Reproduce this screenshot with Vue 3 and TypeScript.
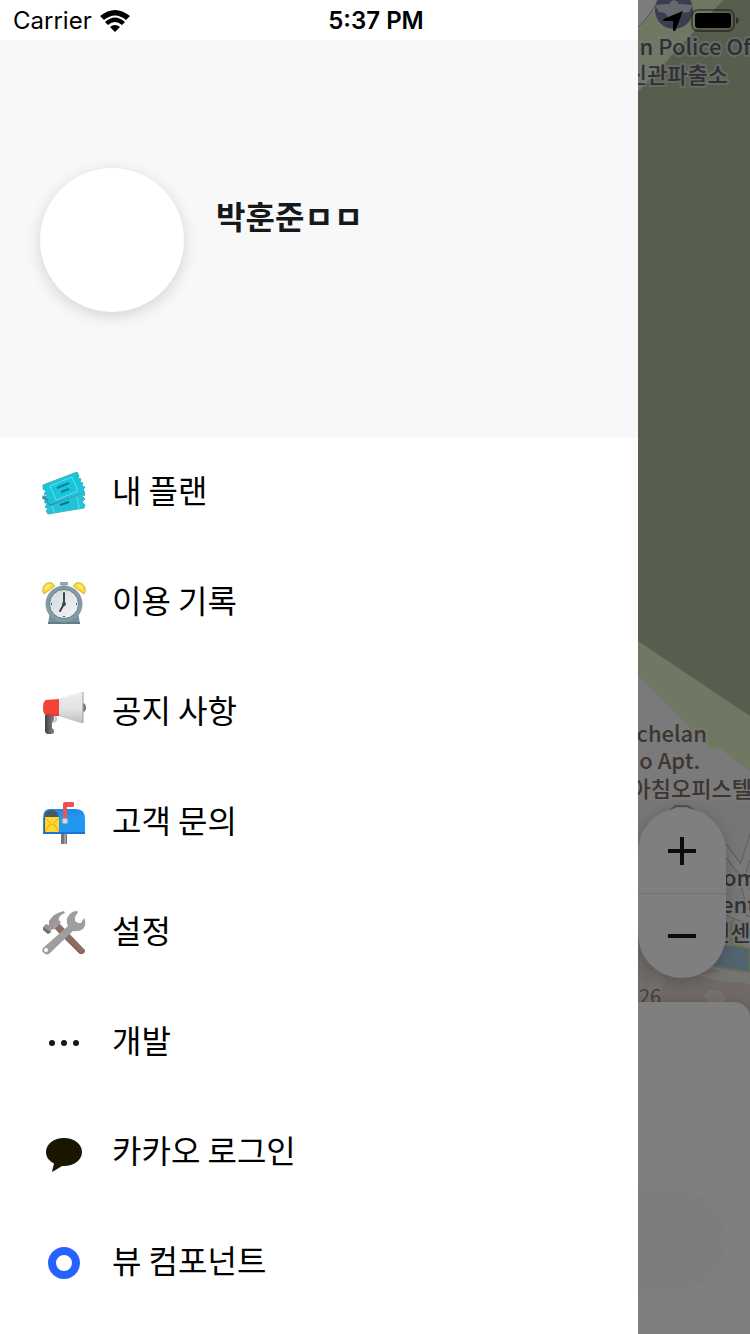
<script setup lang="ts">
interface MenuItem {
  id: string
  label: string
}

const userName = '박훈준ㅁㅁ'

const items: MenuItem[] = [
  { id: 'plan', label: '내 플랜' },
  { id: 'history', label: '이용 기록' },
  { id: 'notice', label: '공지 사항' },
  { id: 'contact', label: '고객 문의' },
  { id: 'settings', label: '설정' },
  { id: 'dev', label: '개발' },
  { id: 'kakao', label: '카카오 로그인' },
  { id: 'view', label: '뷰 컴포넌트' },
]
</script>

<template>
  <div class="app">
    <div class="backdrop">
      <svg class="map" viewBox="0 0 112 1030" aria-hidden="true">
        <rect width="112" height="1030" fill="#f4f4f4" />
        <path d="M20 0H112V771L80 747L72 749L0 675V27Q12 16 20 0Z" fill="#dcf0c6" />
        <path d="M20 0Q12 16 0 27V0Z" fill="#fafafa" />
        <path d="M20 0Q12 16 0 27" fill="none" stroke="#a9a9a5" stroke-width="1" />
        <path d="M85 0H112V716L0 641V92Z" fill="#aebc9c" />
        <path d="M0 800H112V1030H0Z" fill="#ececec" />
        <path d="M0 935L112 985V1030H0Z" fill="#ded4ce" />
        <path d="M60 975L112 968V982Q84 984 60 975Z" fill="#e8e8e6" />
        <path d="M78 944Q94 944 112 949V972Q90 970 70 965Z" fill="#a4c8e0" stroke="#d0dca8" stroke-width="2" />
        <path d="M28 813L38 806H50L59 813" fill="#f4f4f4" stroke="#a4a4a4" stroke-width="2" />
        <g fill="none" stroke-linecap="round">
          <path d="M86 848L104 872L116 835M104 872L112 905M86 910L112 921" stroke="#bdbdbd" stroke-width="9" />
          <path d="M86 848L104 872L116 835M104 872L112 905M86 910L112 921" stroke="#f3f3f3" stroke-width="7" />
        </g>
        <path d="M64 995L72 988L76 991L80 988L90 999L82 1006H70Z" fill="#e8e2de" stroke="#cfc6c0" />
        <path d="M0 973L8 990L22 968L28 980L18 1002H0Z" fill="#e4dcd7" />
        <path d="M86 923L96 919L106 947L88 944Z" fill="#d2deb6" />

        <circle cx="36" cy="10" r="19" fill="#757c9e" />
        <path d="M17 5L29 4Q32 5 32 2L36 0L40 2Q40 5 43 4L55 5L51 12L45 13L42 17L36 21L30 17L27 13L21 12Z" fill="#cdd0dc" />
        <g class="place place-blue">
          <text x="120" y="55" text-anchor="end">an Police Off</text>
          <text x="90" y="83" text-anchor="end">신관파출소</text>
          <text x="85" y="886">oma</text>
          <text x="83" y="913">ente</text>
          <text x="72" y="941">민센터</text>
        </g>
        <g class="place place-brown">
          <text x="69" y="742" text-anchor="end">Richelan</text>
          <text x="62" y="769" text-anchor="end">Studio Apt.</text>
          <text x="114" y="797" text-anchor="end">아침오피스텔</text>
        </g>
        <text class="road" x="1" y="1004">26</text>
      </svg>
      <div class="zoom-control">
        <button type="button" aria-label="확대">
          <svg viewBox="0 0 28 28" aria-hidden="true"><path d="M0 14H28M14 0V28" /></svg>
        </button>
        <button type="button" aria-label="축소">
          <svg viewBox="0 0 28 28" aria-hidden="true"><path d="M0 14H28" /></svg>
        </button>
      </div>
      <section class="sheet">
        <button type="button" class="sheet-action" aria-label="선택"></button>
      </section>
    </div>
    <div class="scrim"></div>

    <aside class="drawer">
      <header class="profile">
        <div class="avatar"></div>
        <div class="identity">
          <h1>{{ userName }}</h1>
        </div>
      </header>
      <nav>
        <ul class="menu">
          <li v-for="item in items" :key="item.id">
            <a href="#" class="entry">
              <svg v-if="item.id === 'plan'" class="icon" viewBox="-2 -2 48 48" aria-hidden="true">
                <path d="M2 26L42 20L43 24L40 25L43 28L40 31L43 34L42 37L6 43L4 40L6 38L3 36L5 33L2 31L4 29L0 27Z" fill="#22c3d8" stroke="#3fb7c6" stroke-width="1" />
                <path d="M0 25L3 24L8 32L42 20V22L8 35L4 30L1 28Z" fill="#37818b" opacity=".7" />
                <path d="M10 35L12 41M35 26L37 37" stroke="#67ddea" stroke-width="1" />
                <path d="M18 34L27 31" stroke="#00788c" stroke-width="2" />
                <path d="M1 14L35 1L37 5L36 7L39 8L38 11L41 12L40 15L43 16L41 19L43 21L8 33L6 30L7 28L4 27L5 24L2 23L4 20L1 18Z" fill="#18c5db" stroke="#38b6c7" stroke-width="1" />
                <path d="M8 15L14 29M30 6L36 20M8 15L30 6M14 29L36 20" stroke="#68deea" stroke-width="1" fill="none" />
                <path d="M15 17L27 12M19 21L27 18" stroke="#078497" stroke-width="2" />
              </svg>

              <svg v-else-if="item.id === 'history'" class="icon" viewBox="-2 -2 48 48" aria-hidden="true">
                <defs>
                  <linearGradient id="face" x2="1" y2="1"><stop stop-color="#d2d8dd" /><stop offset="1" stop-color="#f5f6f7" /></linearGradient>
                </defs>
                <path d="M8 31L6 43H38L36 31Z" fill="#78909c" />
                <path d="M6 41H38V43H6Z" fill="#607d8b" />
                <path d="M18 1H26V4H18Z" fill="#90a4ae" /><path d="M20 4H24V8H20Z" fill="#b0bec5" />
                <circle cx="22" cy="23" r="18.5" fill="#819aa6" />
                <path d="M2 13C-2 7 4 0 10 2L13 5Z" fill="#fdd835" stroke="#c8b74d" />
                <path d="M42 13C46 7 40 0 34 2L31 5Z" fill="#fdd835" stroke="#c8b74d" />
                <path d="M4 9Q4 5 8 4M36 4Q39 5 40 8" fill="none" stroke="#fff176" stroke-width="2" />
                <circle cx="22" cy="23" r="14.5" fill="url(#face)" stroke="#62808d" />
                <path d="M22 12V23L18 30" fill="none" stroke="#37474f" stroke-width="2" stroke-linecap="round" />
                <circle cx="22" cy="23" r="2" fill="#37474f" />
                <path d="M9 23H10M34 23H35M22 35V36" stroke="#455a64" stroke-width="2" />
              </svg>

              <svg v-else-if="item.id === 'notice'" class="icon" viewBox="-2 -2 48 48" aria-hidden="true">
                <defs>
                  <linearGradient id="cone" x2="0" y2="1"><stop stop-color="#eeeeee" /><stop offset=".55" stop-color="#e3e3e3" /><stop offset="1" stop-color="#bdbdbd" /></linearGradient>
                  <linearGradient id="grip" x2="1"><stop stop-color="#424242" /><stop offset="1" stop-color="#858585" /></linearGradient>
                </defs>
                <path d="M12 26Q15 26 14 29Q13 31 10 31" fill="none" stroke="#c8c8c8" stroke-width="2" />
                <path d="M3 24H12V29L10 31V37L12 39V42L10 43H5L3 41Z" fill="url(#grip)" />
                <path d="M40 12Q44 12 44 17Q44 21 40 21Z" fill="#757575" />
                <path d="M16 8L39 1Q41 0 41 2V31Q41 33 39 32L16 25Z" fill="url(#cone)" />
                <path d="M41 1V32" stroke="#9e9e9e" stroke-width="1" />
                <path d="M4 9L17 8V25L4 24Q1 23 1 17Q1 10 4 9Z" fill="#f44336" />
                <path d="M3 22Q10 24 17 23V25L4 24Z" fill="#d83a30" />
              </svg>

              <svg v-else-if="item.id === 'contact'" class="icon" viewBox="-2 -2 48 48" aria-hidden="true">
                <defs><linearGradient id="box" x2="0" y2="1"><stop stop-color="#1e88e5" /><stop offset=".3" stop-color="#2196f3" /><stop offset="1" stop-color="#2196f3" /></linearGradient></defs>
                <path d="M19 32H25V43H19Z" fill="#757575" /><path d="M22 32H24V43H22Z" fill="#9e9e9e" />
                <path d="M8 8H34Q43 8 43 18V33H1V17Q1 8 8 8Z" fill="url(#box)" />
                <path d="M9 9Q17 9 17 18V32H2V18Q2 9 9 9Z" fill="#455a64" />
                <path d="M1 31H43V33H1Z" fill="#1976d2" />
                <path d="M3 16H17V31H3Z" fill="#fdd835" />
                <path d="M3 17L10 24L17 17M3 31L8 23M17 31L12 23" fill="none" stroke="#f2a600" stroke-width="1" />
                <path d="M21 20V3Q21 1 23 1H31Q32 1 32 3V5Q32 6 31 6H25V20Z" fill="#ef5350" />
                <circle cx="23" cy="20" r="3" fill="#cfd8dc" stroke="#90a4ae" stroke-width="1" />
              </svg>

              <svg v-else-if="item.id === 'settings'" class="icon" viewBox="-2 -2 48 48" aria-hidden="true">
                <defs><linearGradient id="steel" x2="1" y2="1"><stop stop-color="#8a8a8a" /><stop offset="1" stop-color="#aaaaaa" /></linearGradient></defs>
                <path d="M12 17L17 12L43 39V41L41 43H38Z" fill="#8d6e63" />
                <path d="M14 19L40 43H38L12 17Z" fill="#795548" />
                <path d="M1 16L4 13L7 14V10Q12 2 22 0L23 2Q18 4 17 7Q16 9 19 11L13 18L9 19L9 21L6 23L1 18Z" fill="url(#steel)" />
                <path d="M1 16L9 21L6 23L1 19Z" fill="#707070" />
                <path d="M1 37L26 15Q23 9 27 4Q30 0 35 0L36 1L33 6V10L36 12H39L42 7L43 9Q44 15 41 18Q37 21 31 20L8 42Q5 45 2 42Q-1 40 1 37Z" fill="#9e9e9e" />
                <circle cx="4" cy="39" r="2" fill="#fff" />
              </svg>

              <svg v-else-if="item.id === 'dev'" class="icon" viewBox="0 0 48 48" aria-hidden="true">
                <g fill="#17181a"><circle cx="12" cy="24" r="3" /><circle cx="24" cy="24" r="3" /><circle cx="36" cy="24" r="3" /></g>
              </svg>

              <svg v-else-if="item.id === 'kakao'" class="icon" viewBox="0 0 48 48" aria-hidden="true">
                <path d="M24 9C14 9 6 15 6 23C6 28 9 32 14 34.500L12 42.500Q12 43 13 42.500L22 37H24C34 37 42 31 42 23C42 15 34 9 24 9Z" fill="#1a1600" />
              </svg>

              <svg v-else class="icon" viewBox="0 0 48 48" aria-hidden="true">
                <circle cx="24" cy="24" r="12" fill="none" stroke="#2563ff" stroke-width="8" />
              </svg>
              <span>{{ item.label }}</span>
            </a>
          </li>
        </ul>
      </nav>
    </aside>

    <div class="status">
      <div class="carrier">
        <span>Carrier</span>
        <svg class="wifi" viewBox="0 0 30 22" aria-hidden="true">
          <path d="M0 6Q15 -6 30 6L26 10Q15 1 4 10Z" />
          <path d="M5 12Q15 3 25 12L22 15Q15 9 8 15Z" />
          <path d="M10 17Q15 13 20 17L15 22Z" />
        </svg>
      </div>
      <time>5:37 PM</time>
      <div class="indicators">
        <svg class="location" viewBox="0 0 18 18" aria-hidden="true"><path d="M18 0L11 18Q10 19 9 17V9H1Q-1 8 1 7Z" /></svg>
        <svg class="battery" viewBox="0 0 48 24" aria-hidden="true">
          <rect x="1" y="1" width="42" height="21" rx="6" fill="none" stroke="#000" stroke-opacity=".4" stroke-width="2" />
          <rect x="4" y="4" width="36" height="15" rx="3" />
          <path d="M45 8Q48 9 48 12Q48 14 45 15Z" opacity=".45" />
        </svg>
      </div>
    </div>
  </div>
</template>

<style>
body {
  margin: 0;
}
</style>

<style scoped>
.app {
  position: relative;
  min-height: 100vh;
  overflow: hidden;
  font-family: "Noto Sans CJK KR", "Noto Sans", sans-serif;
}

.backdrop,
.scrim {
  position: absolute;
  inset: 0;
}

.backdrop {
  background: #f4f4f4;
}

.scrim {
  background: rgba(0, 0, 0, 0.5);
}

.map {
  position: absolute;
  top: 0;
  right: 0;
  width: 112px;
}

.place {
  font-size: 22px;
  font-weight: 500;
  paint-order: stroke;
  stroke: #f4f4f4;
  stroke-opacity: 0.75;
  stroke-width: 4px;
  stroke-linejoin: round;
}

.place-blue {
  fill: #5c6070;
}

.place-blue text:nth-child(-n + 2) {
  stroke-opacity: 0.45;
}

.place-brown {
  fill: #7a6a60;
}

.road {
  font-size: 20px;
  fill: #8c8078;
}

button {
  padding: 0;
  border: 0;
  background: none;
}

.zoom-control {
  position: absolute;
  right: 24px;
  bottom: 356px;
  display: grid;
  grid-template-rows: 1fr 1fr;
  width: 88px;
  height: 170px;
  overflow: hidden;
  border-radius: 44px;
  background: #fff;
  box-shadow: 0 4px 16px rgba(0, 0, 0, 0.2);
}

.zoom-control button {
  display: grid;
  place-items: center;
}

.zoom-control button + button {
  border-top: 1px solid #e0e0e0;
}

.zoom-control svg {
  width: 28px;
  stroke: #17181a;
  stroke-width: 4px;
}

.sheet {
  position: absolute;
  right: 0;
  bottom: 0;
  left: 0;
  display: flex;
  align-items: flex-end;
  box-sizing: border-box;
  height: 332px;
  padding: 44px 24px;
  border-radius: 16px 16px 0 0;
  background: #fff;
  box-shadow: 0 0 12px rgba(0, 0, 0, 0.15);
}

.sheet-action {
  flex: 1;
  height: 100px;
  border-radius: 50px;
  background: #fafafa;
}

.drawer {
  position: relative;
  box-sizing: border-box;
  width: 85%;
  min-height: 100vh;
  padding-top: 40px;
  background: #fff;
}

.profile {
  display: flex;
  align-items: center;
  gap: 32px;
  padding: 128px 40px 126px;
  background: #f8f8f8;
}

.avatar {
  flex: none;
  width: 144px;
  height: 144px;
  border-radius: 50%;
  background: #fff;
  box-shadow: 0 4px 16px rgba(0, 0, 0, 0.15);
}

.identity {
  min-height: 96px;
}

h1 {
  margin: 0;
  color: #17181a;
  font-size: 32px;
  font-weight: 700;
  line-height: 46px;
}

.menu {
  margin: 0;
  padding: 0;
  list-style: none;
}

.entry {
  display: flex;
  align-items: center;
  gap: 24px;
  height: 110px;
  padding: 0 40px;
  color: #000;
  font-size: 32px;
  line-height: 48px;
  text-decoration: none;
}

.entry span {
  padding-bottom: 8px;
}

.icon {
  flex: none;
  width: 48px;
  height: 48px;
}

.status {
  position: absolute;
  top: 0;
  right: 0;
  left: 0;
  display: grid;
  grid-template-columns: 1fr auto 1fr;
  align-items: center;
  padding: 1px 11px 0 13px;
  font-family: Inter, sans-serif;
  font-size: 24px;
  line-height: 40px;
}

.carrier,
.indicators {
  display: flex;
  align-items: center;
  gap: 8px;
}

.indicators {
  justify-content: flex-end;
}

.wifi {
  width: 30px;
  height: 22px;
}

time {
  font-weight: 600;
}

.location {
  width: 20px;
}

.battery {
  width: 48px;
}
</style>
